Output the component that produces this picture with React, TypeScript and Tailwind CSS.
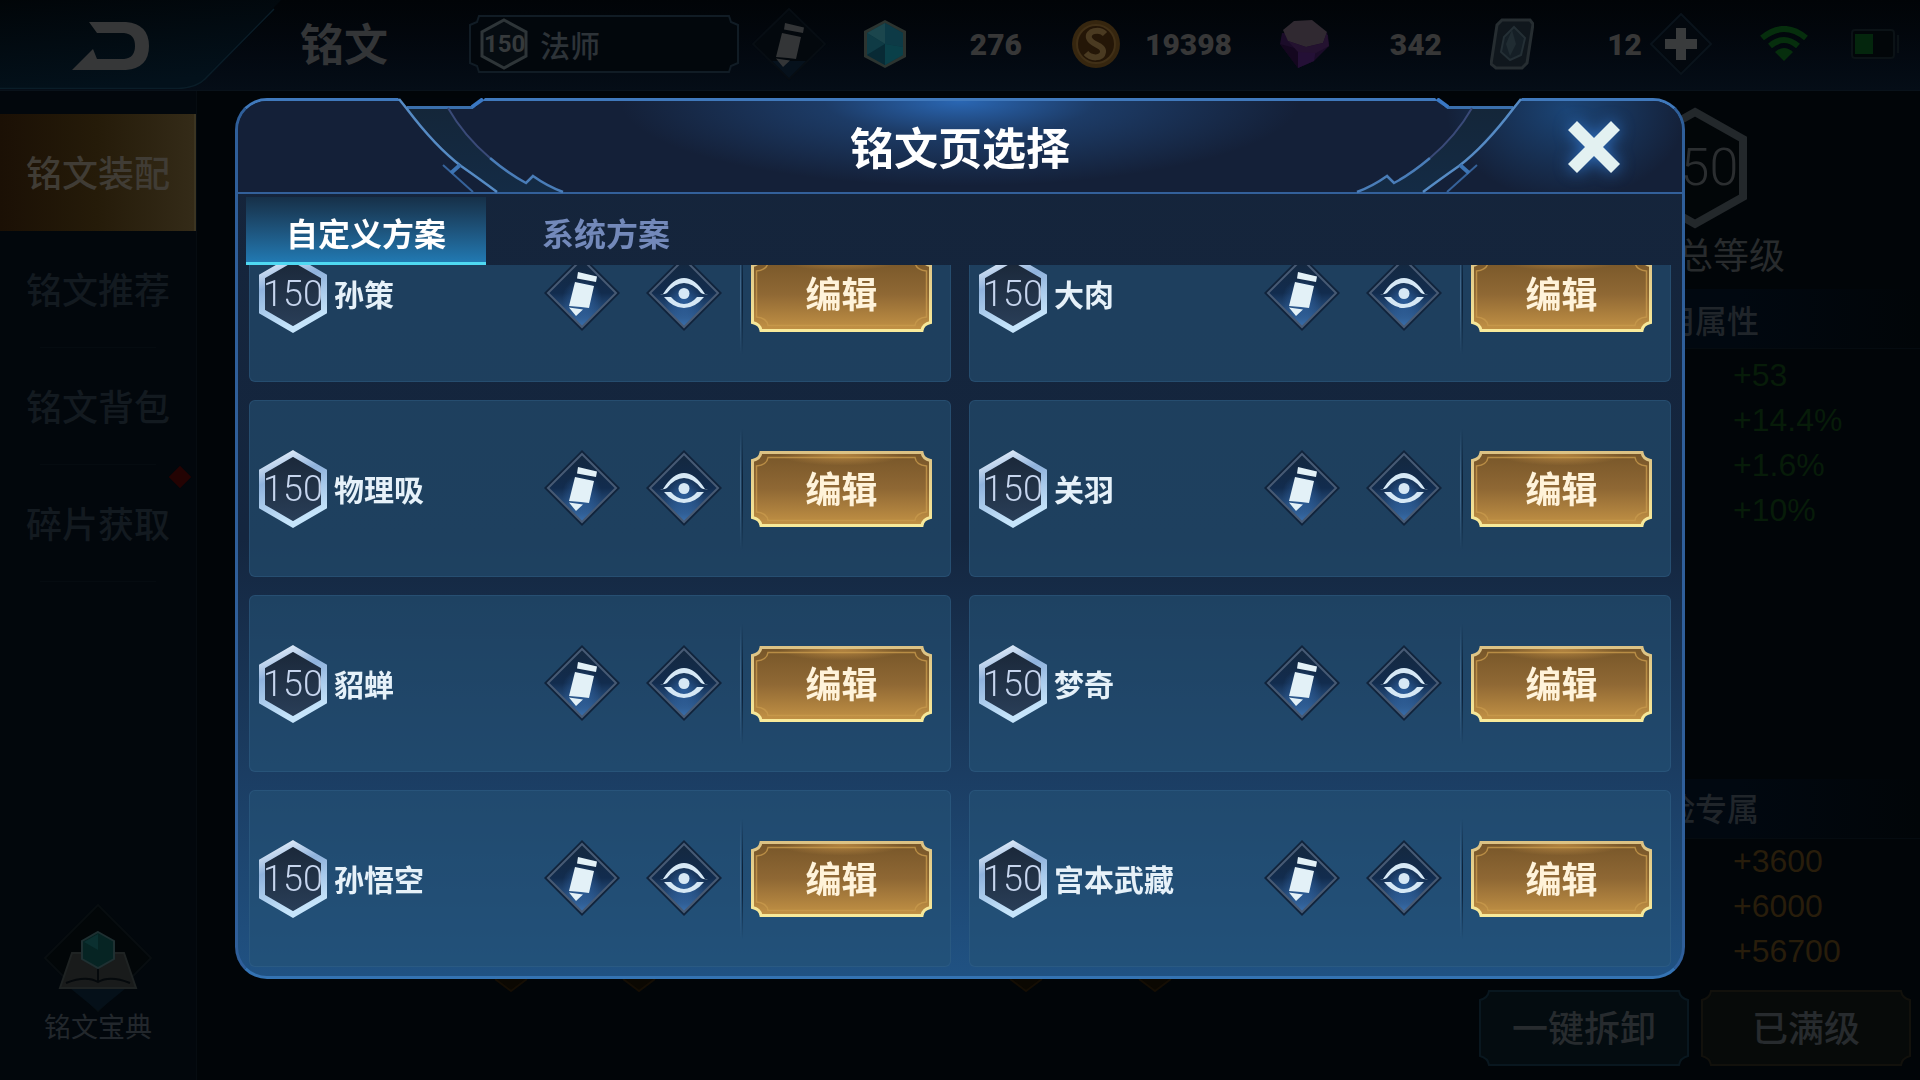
import { useLayoutEffect, useRef, useState } from "react";
import type { ReactNode } from "react";

const PAGES = [
  "孙策",
  "大肉",
  "物理吸",
  "关羽",
  "貂蝉",
  "梦奇",
  "孙悟空",
  "宫本武藏",
];

const TABS = ["自定义方案", "系统方案"];

const NAV_ITEMS = ["铭文装配", "铭文推荐", "铭文背包", "碎片获取"];

const COMMON_STATS = ["+53", "+14.4%", "+1.6%", "+10%"];
const ADVENTURE_STATS = ["+3600", "+6000", "+56700"];

function PencilShape() {
  return (
    <path d="M34 17 53 21.500 52 27 33 23.500zM31 27 50 31 45 53 37 52 25 51zM25 52.500 39 54.500 32 61z" />
  );
}

function Diamond({ children }: { children: ReactNode }) {
  return (
    <svg viewBox="0 0 76 76" className="size-[76px]" aria-hidden="true">
      <defs>
        <linearGradient id="diamond-fill" x1="0" y1="0" x2="0" y2="1">
          <stop offset="0" stopColor="#14283f" />
          <stop offset="0.5" stopColor="#122c4e" />
          <stop offset="1" stopColor="#3a70ae" />
        </linearGradient>
        <radialGradient id="diamond-glow">
          <stop offset="0" stopColor="#3a78c4" stopOpacity="0.6" />
          <stop offset="1" stopColor="#3a78c4" stopOpacity="0" />
        </radialGradient>
      </defs>
      <path d="M38 0 76 38 38 76 0 38z" fill="#10233b" />
      <path
        d="M38 4 72 38 38 72 4 38z"
        fill="url(#diamond-fill)"
        stroke="#475a74"
        strokeWidth="2"
      />
      <circle cx="38" cy="44" r="20" fill="url(#diamond-glow)" />
      {children}
    </svg>
  );
}

function PencilIcon() {
  return (
    <Diamond>
      <g fill="#e3f1f7">
        <PencilShape />
      </g>
    </Diamond>
  );
}

function EyeIcon() {
  return (
    <Diamond>
      <g fill="#d6e8f5">
        <path d="M14 39H17Q27 23 38 23T59 39H62Q58 40 55 38 47 28 38 28T21 38Q18 40 14 39z" />
        <path d="M18 42H25Q31 49 38 49T51 42H58Q49 53 38 53T18 42z" />
        <circle cx="38" cy="38.500" r="5.500" />
      </g>
    </Diamond>
  );
}

function LevelBadge() {
  return (
    <span className="grid h-[78px] w-[68px] shrink-0 place-items-center">
      <svg
        viewBox="0 0 68 78"
        className="col-start-1 row-start-1 h-[78px] w-[68px]"
        aria-hidden="true"
      >
        <defs>
          <linearGradient id="badge-edge" x1="0" y1="0" x2="0.3" y2="1">
            <stop offset="0" stopColor="#f2f8ff" />
            <stop offset="0.4" stopColor="#8fb2dc" />
            <stop offset="1" stopColor="#c5e4fb" />
          </linearGradient>
          <linearGradient id="badge-fill" x1="0" y1="0" x2="0" y2="1">
            <stop offset="0" stopColor="#1a2738" />
            <stop offset="1" stopColor="#2a3f59" />
          </linearGradient>
        </defs>
        <path
          d="M34 3.500 65 21.500v35L34 74.500 3 56.500v-35z"
          fill="url(#badge-fill)"
          stroke="url(#badge-edge)"
          strokeWidth="6"
        />
      </svg>
      <span className="col-start-1 row-start-1 font-[Roboto] text-4xl leading-none font-light text-[#c6d5ee]">
        150
      </span>
    </span>
  );
}

function GoldButton({ children }: { children: ReactNode }) {
  return (
    <button
      type="button"
      className="grid h-[76px] w-[181px] shrink-0 place-items-center"
    >
      <svg
        viewBox="0 0 181 76"
        className="col-start-1 row-start-1 h-[76px] w-[181px]"
        aria-hidden="true"
      >
        <defs>
          <linearGradient id="gold-fill" x1="0" y1="0" x2="0" y2="1">
            <stop offset="0" stopColor="#775629" />
            <stop offset="0.5" stopColor="#8f6834" />
            <stop offset="1" stopColor="#c39245" />
          </linearGradient>
          <linearGradient id="gold-edge" x1="0" y1="0" x2="0" y2="1">
            <stop offset="0" stopColor="#dcc284" />
            <stop offset="1" stopColor="#f8ea9a" />
          </linearGradient>
          <radialGradient id="gold-shine" cx="0.5" cy="0" r="0.4">
            <stop offset="0" stopColor="#d09a4c" stopOpacity="0.7" />
            <stop offset="1" stopColor="#d09a4c" stopOpacity="0" />
          </radialGradient>
        </defs>
        <path
          d="M10 1.500H171Q172 8 179.500 9.500V66.500Q172 68 171 74.500H10Q9 68 1.500 66.500V9.500Q9 8 10 1.500z"
          fill="url(#gold-fill)"
          stroke="url(#gold-edge)"
          strokeWidth="3"
        />
        <path d="M12 3H169V32H12z" fill="url(#gold-shine)" />
        <path
          d="M17 6.500H164Q165 14 175.500 15V61Q165 62 164 69.500H17Q16 62 5.500 61V15Q16 14 17 6.500z"
          fill="none"
          stroke="#c89a4c"
          strokeWidth="1.500"
          strokeOpacity="0.8"
        />
      </svg>
      <span className="col-start-1 row-start-1 pb-1 text-4xl leading-none font-bold text-[#fff3da]">
        {children}
      </span>
    </button>
  );
}

function PageCard({ name }: { name: string }) {
  return (
    <li className="flex h-[177px] items-center rounded-md border border-[#3c6c97]/30 bg-[#245275]/60 pr-[18px] pl-[9px]">
      <LevelBadge />
      <span className="ml-[7px] flex-1 pb-[2px] text-[30px] leading-none font-bold whitespace-nowrap text-[#e6f1f9]">
        {name}
      </span>
      <button
        type="button"
        aria-label={`重命名 ${name}`}
        className="pb-[2px]"
      >
        <PencilIcon />
      </button>
      <button
        type="button"
        aria-label={`预览 ${name}`}
        className="ml-[26px] pb-[2px]"
      >
        <EyeIcon />
      </button>
      <span className="mr-2 ml-[18px] h-[120px] w-[3px] border-r border-l border-r-[#0d2138] border-l-[#3f6588] mask-y-from-60%" />
      <GoldButton>编辑</GoldButton>
    </li>
  );
}

/* Corner ornament of the dialog header, mirrored for the right side */
function HeaderCorner({ id }: { id: string }) {
  return (
    <svg viewBox="0 0 340 97" className="h-[97px] w-[340px]" aria-hidden="true">
      <defs>
        <linearGradient id={id} x1="0" y1="0" x2="0" y2="1">
          <stop offset="0" stopColor="#142639" />
          <stop offset="1" stopColor="#142b45" />
        </linearGradient>
      </defs>
      <path
        d="M170 9H213Q229 38 255 60T291 85L298 79 328 94H262L226 69z"
        fill={`url(#${id})`}
      />
      <path d="M163 0 172 9H241L250 0z" fill="#010509" />
      <path d="M172 9.500H238" fill="none" stroke="#3a6fac" strokeWidth="3" />
      <path d="M237 9 248 1" fill="none" stroke="#3a78c4" strokeWidth="4" />
      <path
        d="M164 1 172 11Q200 48 226 68 246 82 262 94"
        fill="none"
        stroke="#568bc4"
        strokeWidth="2.500"
      />
      <path
        d="M213 10Q229 38 255 60"
        fill="none"
        stroke="#3a4a78"
        strokeWidth="2"
      />
      <path
        d="M255 60Q274 76 291 85L298 78Q312 88 328 94"
        fill="none"
        stroke="#4a7db8"
        strokeWidth="2.500"
      />
      <path d="M208 67 238 94" fill="none" stroke="#36629a" strokeWidth="2" />
      <path d="M225 67 216 75" stroke="#3d74b4" strokeWidth="4" />
    </svg>
  );
}

function PageDialog() {
  const [tab, setTab] = useState(0);
  const listRef = useRef<HTMLUListElement>(null);

  useLayoutEffect(() => {
    if (listRef.current) {
      listRef.current.scrollTop = listRef.current.scrollHeight;
    }
  }, []);

  return (
    <div className="fixed inset-0 flex px-[235px] pt-[98px] pb-[101px]">
      <section
        role="dialog"
        aria-label="铭文页选择"
        className="relative flex min-w-0 flex-1 flex-col rounded-[32px] border-[3px] border-t-[#4079bc] border-r-[#2f5f9a] border-b-[#3473b3] border-l-[#2f5f9a] bg-linear-to-b from-[#15243a] via-[#14263f] via-50% to-[#205283]"
      >
        <header className="flex h-[93px] items-center rounded-t-[29px] border-b-2 border-[#33609a] bg-[radial-gradient(ellipse_340px_85px_at_50%_0,#2a67b4_0%,#24538f88_40%,#15203800_100%),radial-gradient(ellipse_120px_90px_at_92%_10%,#1b4475_0%,#15203800_100%)] bg-[#142038]">
          <h2 className="flex-1 pb-[2px] pl-[115px] text-center text-[44px] leading-none font-bold text-white">
            铭文页选择
          </h2>
          <button type="button" aria-label="关闭" className="mr-[61px]">
            <svg
              viewBox="0 0 54 54"
              className="size-[54px] drop-shadow-[0_0_8px_#2f6fc0]"
            >
              <path
                d="M10 1 27 18 44 1 53 10 36 27 53 44 44 53 27 36 10 53 1 44 18 27 1 10z"
                fill="#e3f1f1"
              />
            </svg>
          </button>
        </header>
        <div className="pointer-events-none absolute -top-[3px] -left-[3px]">
          <HeaderCorner id="corner-left" />
        </div>
        <div className="pointer-events-none absolute -top-[3px] -right-[3px] -scale-x-100">
          <HeaderCorner id="corner-right" />
        </div>

        <div role="tablist" className="flex h-[71px] items-end pl-2">
          {TABS.map((label, i) => (
            <button
              key={label}
              type="button"
              role="tab"
              aria-selected={tab === i}
              onClick={() => setTab(i)}
              className={
                tab === i
                  ? "h-[68px] w-[240px] border-b-[3px] border-[#4fd9f2] bg-linear-to-b from-[#163048] to-[#2179b2] pt-1 text-[32px] leading-none font-bold text-white"
                  : "h-[68px] w-[240px] border-b-[3px] border-transparent pt-1 text-[32px] leading-none font-bold text-[#7389ba]"
              }
            >
              {label}
            </button>
          ))}
        </div>

        <ul
          ref={listRef}
          className="grid min-h-0 flex-1 grid-cols-2 content-start gap-[18px] overflow-y-auto rounded-b-[29px] px-[11px] pb-[9px] [scrollbar-width:none]"
        >
          {PAGES.map((name) => (
            <PageCard key={name} name={name} />
          ))}
        </ul>
      </section>
    </div>
  );
}

function CrystalIcon() {
  return (
    <svg viewBox="0 0 44 50" className="h-[50px] w-11" aria-hidden="true">
      <path d="M22 1 43 12V38L22 49 1 38V12z" fill="#2c3430" />
      <path d="M22 4 40 14V36L22 46 4 36V14z" fill="#0c333d" />
      <path d="M22 4V25L4 14z" fill="#1b464d" />
      <path d="M22 4 40 14V28L22 25z" fill="#0d3a46" />
      <path d="M4 14 22 25 4 36z" fill="#0f3b45" />
      <path d="M40 28V36L22 46V25z" fill="#0a4049" />
      <path d="M4 36 22 25V46z" fill="#082a35" />
    </svg>
  );
}

function CoinIcon() {
  return (
    <svg viewBox="0 0 50 50" className="size-[50px]" aria-hidden="true">
      <circle cx="25" cy="25" r="24" fill="#36260f" />
      <circle
        cx="25"
        cy="25"
        r="19"
        fill="#241607"
        stroke="#413017"
        strokeWidth="2"
      />
      <path
        d="M34 15C28 9 16 12 18 19S33 26 32 33 20 40 15 34"
        fill="none"
        stroke="#4a3a21"
        strokeWidth="6"
      />
    </svg>
  );
}

function GemIcon() {
  return (
    <svg viewBox="0 0 50 50" className="size-[50px]" aria-hidden="true">
      <path d="M2 14 0 25 18 49 34 42 49 27 48 16z" fill="#1b0c29" />
      <path d="M0 25 18 30 18 49z" fill="#14071f" />
      <path d="M18 30 36 30 34 42 18 49z" fill="#241036" />
      <path d="M3 11 14 2 32 1 47 13 43 24 26 28 8 22z" fill="#302931" />
      <path d="M8 22 26 28 43 24 47 13 49 27 36 34 18 33z" fill="#241230" />
    </svg>
  );
}

function CardIcon() {
  return (
    <svg viewBox="0 0 44 52" className="h-[52px] w-11" aria-hidden="true">
      <path
        d="M12 2H40L43 6 37 45 32 50H6L1 46 7 7z"
        fill="#10171d"
        stroke="#262d31"
        strokeWidth="3"
      />
      <path
        d="M24 9 35 20 31 37 20 42 11 34 14 19z"
        fill="#151f26"
        stroke="#242f35"
        strokeWidth="2"
      />
      <path d="M22 12 26 26 20 38 16 26z" fill="#202c32" />
    </svg>
  );
}

function TopBar() {
  return (
    <header className="flex h-[91px] items-center border-b border-[#09121a] bg-linear-to-b from-[#010407] to-[#050d17] pb-[2px] font-[Roboto] text-[30px] font-black text-[#373737]">
      <button
        type="button"
        aria-label="返回"
        className="h-[90px] w-[300px] shrink-0"
      >
        <svg viewBox="0 0 300 90" className="h-[90px] w-[300px]">
          <defs>
            <linearGradient id="back-fill" x1="0" y1="0" x2="0.3" y2="1">
              <stop offset="0" stopColor="#010508" />
              <stop offset="1" stopColor="#03111b" />
            </linearGradient>
          </defs>
          <path
            d="M0 89.500H178Q196 89 205 80L282 0H0z"
            fill="url(#back-fill)"
          />
          <path
            d="M0 89.500H178Q196 89 205 80L274 10"
            fill="none"
            stroke="#0a1d28"
            strokeWidth="1.500"
          />
          <path
            d="M89 23H126Q149 25 149 47T126 71H72L93 50 97 60H124Q135 59 135 47T124 34H97z"
            fill="#363738"
          />
        </svg>
      </button>
      <h1 className="w-[169px] pb-1 font-['Noto_Sans_CJK_SC',sans-serif] text-[44px] leading-none font-bold text-[#333537]">
        铭文
      </h1>
      <button
        type="button"
        className="grid h-[58px] w-[270px] shrink-0 items-center"
      >
        <svg
          viewBox="0 0 270 58"
          className="col-start-1 row-start-1 h-[58px] w-[270px]"
          aria-hidden="true"
        >
          <path
            d="M10 1H260L262 7 269 10V48L262 51 260 57H10L8 51 1 48V10L8 7z"
            fill="#02070c"
            stroke="#111c25"
            strokeWidth="2"
          />
          <path
            d="M35 5 57 17V41L35 53 13 41V17z"
            fill="#060c11"
            stroke="#2e3538"
            strokeWidth="3"
          />
        </svg>
        <span className="col-start-1 row-start-1 flex items-center pl-[15px]">
          <span className="w-10 text-center text-2xl leading-none font-bold text-[#363a3c]">
            150
          </span>
          <span className="ml-4 font-['Noto_Sans_CJK_SC',sans-serif] text-[30px] leading-none font-medium text-[#2d3338]">
            法师
          </span>
        </span>
      </button>
      <button type="button" aria-label="重命名" className="ml-3">
        <svg viewBox="0 0 76 76" className="size-[76px]">
          <path
            d="M38 3 74 38 38 73 2 38z"
            fill="#03080d"
            stroke="#070d13"
            strokeWidth="2"
          />
          <path d="M21 55 38 72 55 55z" fill="#06111c" />
          <g fill="#333537">
            <PencilShape />
          </g>
        </svg>
      </button>
      <span className="ml-9">
        <CrystalIcon />
      </span>
      <span className="w-[115px] text-right">276</span>
      <span className="ml-[49px]">
        <CoinIcon />
      </span>
      <span className="w-[111px] text-right">19398</span>
      <span className="ml-12">
        <GemIcon />
      </span>
      <span className="w-[112px] text-right">342</span>
      <span className="ml-12">
        <CardIcon />
      </span>
      <span className="w-[108px] text-right">12</span>
      <button type="button" aria-label="增加" className="ml-2">
        <svg viewBox="0 0 62 62" className="size-[62px]">
          <path
            d="M31 1 61 31 31 61 1 31z"
            fill="#03080e"
            stroke="#0a131b"
            strokeWidth="2"
          />
          <path
            d="M26 15H36V26H47V36H36V47H26V36H15V26H26z"
            fill="#393b3c"
          />
        </svg>
      </button>
      <svg
        viewBox="0 0 48 36"
        className="ml-12 h-9 w-12"
        role="img"
        aria-label="网络"
      >
        <g fill="none" stroke="#062e0d" strokeWidth="6">
          <path d="M2 12Q24-6 46 12" />
          <path d="M10 20Q24 8 38 20" />
        </g>
        <path d="M24 35 15 26Q24 18 33 26z" fill="#062e0d" />
      </svg>
      <svg
        viewBox="0 0 50 30"
        className="ml-[43px] h-[30px] w-[50px]"
        role="img"
        aria-label="电量"
      >
        <rect
          x="1"
          y="1"
          width="42"
          height="28"
          rx="3"
          fill="#020609"
          stroke="#0b1216"
          strokeWidth="2"
        />
        <path d="M47 6V24" stroke="#0b1216" strokeWidth="2" />
        <path d="M4 5H22V25H4z" fill="#04260d" />
      </svg>
    </header>
  );
}

function Sidebar() {
  return (
    <nav className="flex w-[197px] shrink-0 flex-col border-r border-[#060c11] bg-[#02070c] pt-[23px]">
      {NAV_ITEMS.map((label, i) => (
        <a
          key={label}
          href="#"
          className={
            i === 0
              ? "flex h-[117px] items-center border-r-2 border-[#3c3522] bg-linear-to-r from-[#1b1005] via-[#251b09] to-[#342b18] pb-1 pl-[26px] text-4xl leading-none font-medium text-[#403c35]"
              : "relative flex h-[117px] items-center pb-1 pl-[26px] text-4xl leading-none font-medium text-[#131a20]"
          }
        >
          {label}
          {i > 0 && (
            <span className="absolute inset-x-10 bottom-0 h-px bg-[#050b10]" />
          )}
          {i === 3 && (
            <span className="absolute top-1 right-2 size-4 rotate-45 bg-[#240303]" />
          )}
        </a>
      ))}
      <a
        href="#"
        className="mt-auto mb-10 flex flex-col items-center text-[27px] leading-7 text-[#22272c]"
      >
        <svg
          viewBox="0 0 108 108"
          className="size-[108px]"
          aria-hidden="true"
        >
          <path
            d="M54 1 107 54 54 107 1 54z"
            fill="#020608"
            stroke="#080d10"
            strokeWidth="2"
          />
          <path d="M26 84H82L54 107z" fill="#051019" />
          <path
            d="M28 49H80L92 84H16z"
            fill="#191b1b"
            stroke="#1f2323"
            strokeWidth="2"
          />
          <path
            d="M22 79Q42 71 54 78 66 71 86 79"
            fill="none"
            stroke="#05090c"
            strokeWidth="2"
          />
          <path d="M54 52V78" stroke="#05090c" strokeWidth="2" />
          <path
            d="M54 28 70 37V55L54 64 38 55V37z"
            fill="#062423"
            stroke="#1f3032"
            strokeWidth="2"
          />
          <path d="M54 30V46L40 38z" fill="#0b3030" />
        </svg>
        铭文宝典
      </a>
    </nav>
  );
}

/* Rune slots, only the tips show under the dialog */
function RuneSlots() {
  return (
    <main className="flex min-w-0 flex-1 items-end pb-[88px] pl-[298px]">
      <svg viewBox="0 0 680 24" className="h-6 w-[680px]" aria-hidden="true">
        <g fill="#0b0802" stroke="#150e04" strokeWidth="2">
          <path d="M0 11 16 23 32 11" />
          <path d="M128 11 144 23 160 11" />
          <path d="M515 11 531 23 547 11" />
          <path d="M644 11 660 23 676 11" />
        </g>
      </svg>
    </main>
  );
}

function DimButton({
  children,
  className,
}: {
  children: ReactNode;
  className: string;
}) {
  return (
    <button
      type="button"
      className={`grid h-[76px] w-[210px] place-items-center ${className}`}
    >
      <svg
        viewBox="0 0 210 76"
        className="col-start-1 row-start-1 h-[76px] w-[210px]"
        aria-hidden="true"
      >
        <path
          d="M10 1H200Q201 8 209 10V66Q201 68 200 75H10Q9 68 1 66V10Q9 8 10 1z"
          fill="currentColor"
          fillOpacity="0.4"
          stroke="currentColor"
          strokeWidth="2"
        />
      </svg>
      <span className="col-start-1 row-start-1 pb-1 text-4xl leading-none font-medium text-[#272b2e]">
        {children}
      </span>
    </button>
  );
}

function StatsPanel() {
  return (
    <aside className="flex w-[450px] shrink-0 flex-col">
      <div className="mt-4 flex flex-col items-center">
        <span className="grid h-[122px] w-[106px] place-items-center">
          <svg
            viewBox="0 0 106 122"
            className="col-start-1 row-start-1 h-[122px] w-[106px]"
            aria-hidden="true"
          >
            <path
              d="M53 5 101 32V90L53 117 5 90V32z"
              fill="#020608"
              stroke="#23282b"
              strokeWidth="8"
            />
          </svg>
          <span className="col-start-1 row-start-1 font-[Roboto] text-[52px] leading-none font-light text-[#2b2e30]">
            150
          </span>
        </span>
        <p className="mt-1 text-4xl leading-10 text-[#282b2d]">铭文总等级</p>
      </div>
      <h3 className="mt-4 h-[60px] border-b border-[#050b10] bg-linear-to-r from-[#010810] from-60% to-transparent text-center text-[32px] leading-[60px] font-medium text-[#20252a]">
        通用属性
      </h3>
      <ul className="mt-1 pl-[263px] font-['Liberation_Sans',sans-serif] text-[32px] leading-[45px] text-[#071c09]">
        {COMMON_STATS.map((value) => (
          <li key={value}>{value}</li>
        ))}
      </ul>
      <h3 className="mt-auto h-[60px] border-b border-[#050b10] bg-linear-to-r from-[#010810] from-60% to-transparent text-center text-[32px] leading-[56px] font-medium text-[#20252a]">
        冒险专属
      </h3>
      <ul className="pl-[263px] font-['Liberation_Sans',sans-serif] text-[32px] leading-[45px] text-[#281d0b]">
        {ADVENTURE_STATS.map((value) => (
          <li key={value}>{value}</li>
        ))}
      </ul>
      <div className="mt-4 mb-[14px] flex justify-end gap-3 pr-[9px]">
        <DimButton className="text-[#09171f]">一键拆卸</DimButton>
        <DimButton className="text-[#12110c]">已满级</DimButton>
      </div>
    </aside>
  );
}

export default function App() {
  return (
    <div className="flex min-h-screen flex-col bg-[#010508] font-['Noto_Sans_CJK_SC',sans-serif]">
      <TopBar />
      <div className="flex flex-1">
        <Sidebar />
        <RuneSlots />
        <StatsPanel />
      </div>
      <PageDialog />
    </div>
  );
}
